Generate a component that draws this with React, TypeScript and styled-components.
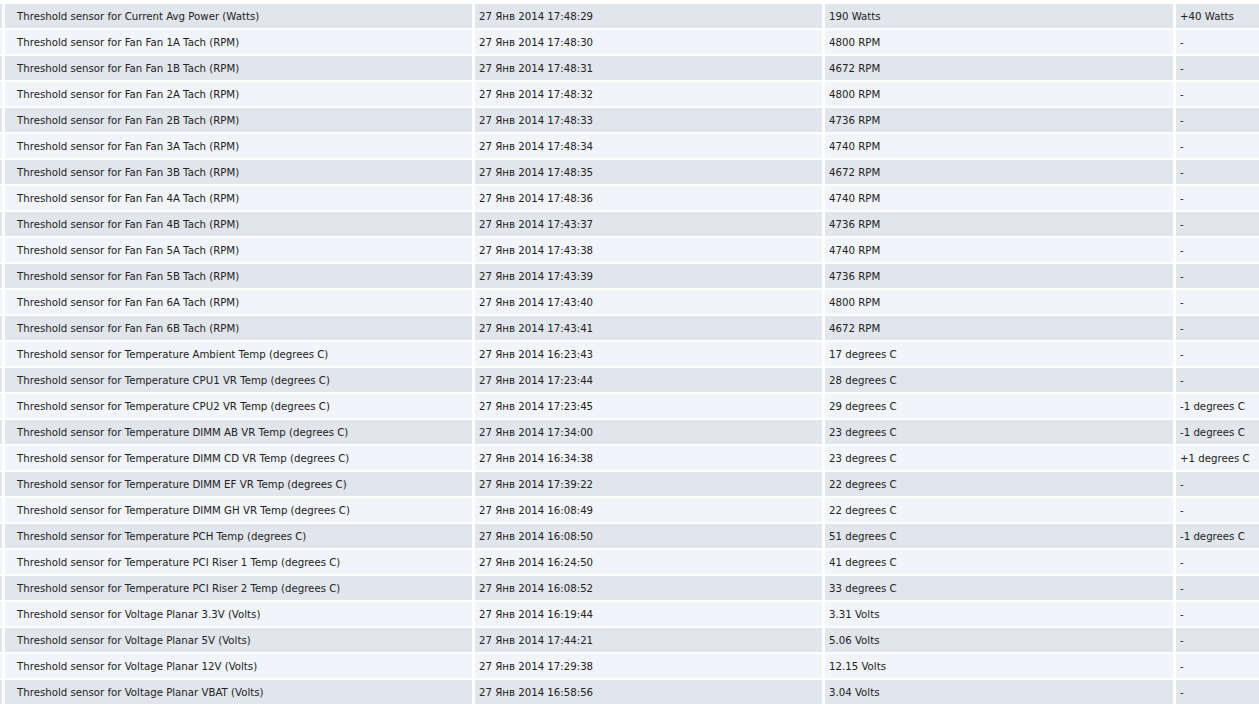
import React from "react";
import styled, { createGlobalStyle } from "styled-components";

const Global = createGlobalStyle`
  html, body { margin: 0; padding: 0; background: #ffffff; }
  body { font-family: "DejaVu Sans", Verdana, sans-serif; overflow: hidden; }
`;

const Table = styled.div`
  display: flex;
  flex-direction: column;
  gap: 2px;
  padding-top: 4px;
  width: 1259px;
  overflow: hidden;
`;

const Row = styled.div<{ $odd: boolean }>`
  display: grid;
  grid-template-columns: 2px 467px 347px 348px 1fr;
  column-gap: 3px;
  height: 24px;
  --bg: ${(p) => (p.$odd ? "#e1e5ec" : "#f1f4f8")};
`;

const Cell = styled.div<{ $pad?: number }>`
  background: var(--bg);
  display: flex;
  align-items: center;
  padding-left: ${(p) => p.$pad ?? 4}px;
  font-size: 10.2px;
  color: #222222;
  white-space: nowrap;
  overflow: hidden;
`;

const rows: [string, string, string, string][] = [
  ["Threshold sensor for Current Avg Power (Watts)", "27 Янв 2014 17:48:29", "190 Watts", "+40 Watts"],
  ["Threshold sensor for Fan Fan 1A Tach (RPM)", "27 Янв 2014 17:48:30", "4800 RPM", "-"],
  ["Threshold sensor for Fan Fan 1B Tach (RPM)", "27 Янв 2014 17:48:31", "4672 RPM", "-"],
  ["Threshold sensor for Fan Fan 2A Tach (RPM)", "27 Янв 2014 17:48:32", "4800 RPM", "-"],
  ["Threshold sensor for Fan Fan 2B Tach (RPM)", "27 Янв 2014 17:48:33", "4736 RPM", "-"],
  ["Threshold sensor for Fan Fan 3A Tach (RPM)", "27 Янв 2014 17:48:34", "4740 RPM", "-"],
  ["Threshold sensor for Fan Fan 3B Tach (RPM)", "27 Янв 2014 17:48:35", "4672 RPM", "-"],
  ["Threshold sensor for Fan Fan 4A Tach (RPM)", "27 Янв 2014 17:48:36", "4740 RPM", "-"],
  ["Threshold sensor for Fan Fan 4B Tach (RPM)", "27 Янв 2014 17:43:37", "4736 RPM", "-"],
  ["Threshold sensor for Fan Fan 5A Tach (RPM)", "27 Янв 2014 17:43:38", "4740 RPM", "-"],
  ["Threshold sensor for Fan Fan 5B Tach (RPM)", "27 Янв 2014 17:43:39", "4736 RPM", "-"],
  ["Threshold sensor for Fan Fan 6A Tach (RPM)", "27 Янв 2014 17:43:40", "4800 RPM", "-"],
  ["Threshold sensor for Fan Fan 6B Tach (RPM)", "27 Янв 2014 17:43:41", "4672 RPM", "-"],
  ["Threshold sensor for Temperature Ambient Temp (degrees C)", "27 Янв 2014 16:23:43", "17 degrees C", "-"],
  ["Threshold sensor for Temperature CPU1 VR Temp (degrees C)", "27 Янв 2014 17:23:44", "28 degrees C", "-"],
  ["Threshold sensor for Temperature CPU2 VR Temp (degrees C)", "27 Янв 2014 17:23:45", "29 degrees C", "-1 degrees C"],
  ["Threshold sensor for Temperature DIMM AB VR Temp (degrees C)", "27 Янв 2014 17:34:00", "23 degrees C", "-1 degrees C"],
  ["Threshold sensor for Temperature DIMM CD VR Temp (degrees C)", "27 Янв 2014 16:34:38", "23 degrees C", "+1 degrees C"],
  ["Threshold sensor for Temperature DIMM EF VR Temp (degrees C)", "27 Янв 2014 17:39:22", "22 degrees C", "-"],
  ["Threshold sensor for Temperature DIMM GH VR Temp (degrees C)", "27 Янв 2014 16:08:49", "22 degrees C", "-"],
  ["Threshold sensor for Temperature PCH Temp (degrees C)", "27 Янв 2014 16:08:50", "51 degrees C", "-1 degrees C"],
  ["Threshold sensor for Temperature PCI Riser 1 Temp (degrees C)", "27 Янв 2014 16:24:50", "41 degrees C", "-"],
  ["Threshold sensor for Temperature PCI Riser 2 Temp (degrees C)", "27 Янв 2014 16:08:52", "33 degrees C", "-"],
  ["Threshold sensor for Voltage Planar 3.3V (Volts)", "27 Янв 2014 16:19:44", "3.31 Volts", "-"],
  ["Threshold sensor for Voltage Planar 5V (Volts)", "27 Янв 2014 17:44:21", "5.06 Volts", "-"],
  ["Threshold sensor for Voltage Planar 12V (Volts)", "27 Янв 2014 17:29:38", "12.15 Volts", "-"],
  ["Threshold sensor for Voltage Planar VBAT (Volts)", "27 Янв 2014 16:58:56", "3.04 Volts", "-"],
];

export default function App() {
  return (
    <>
      <Global />
      <Table>
        {rows.map((r, i) => (
          <Row key={i} $odd={i % 2 === 0}>
            <Cell $pad={0} />
            <Cell $pad={12}>{r[0]}</Cell>
            <Cell>{r[1]}</Cell>
            <Cell>{r[2]}</Cell>
            <Cell>{r[3]}</Cell>
          </Row>
        ))}
      </Table>
    </>
  );
}
